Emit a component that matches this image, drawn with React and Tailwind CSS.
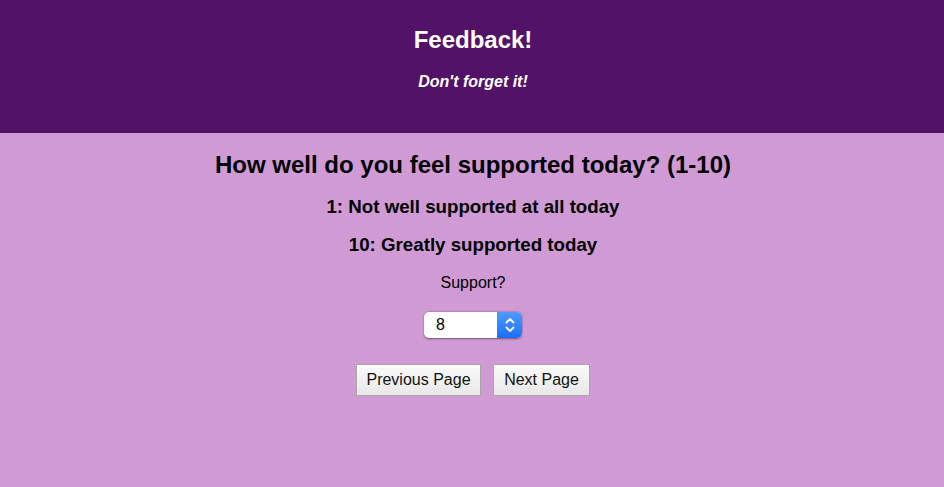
export default function App() {
  return (
    <div className="min-h-screen bg-[#d09ad4] text-black" style={{ fontFamily: '"Liberation Sans", Arial, Helvetica, sans-serif' }}>
      <header className="h-[133px] bg-[#521268] text-white flex flex-col items-center pt-[26px] pl-[2px]">
        <h1 className="text-[24px] leading-[28px] font-bold">Feedback!</h1>
        <p className="mt-[18px] text-[16px] leading-[20px] font-bold italic">Don't forget it!</p>
      </header>
      <main className="flex flex-col items-center pl-[2px]">
        <h2 className="mt-[18px] text-[24px] leading-[28px] font-bold">How well do you feel supported today? (1-10)</h2>
        <h3 className="mt-[17px] text-[18.72px] leading-[22px] font-bold">1: Not well supported at all today</h3>
        <h3 className="mt-[16px] text-[18.72px] leading-[22px] font-bold">10: Greatly supported today</h3>
        <p className="mt-[17px] text-[16px] leading-[20px]">Support?</p>
        <div className="mt-[19px] flex h-[26px] w-[98px] rounded-[5px] bg-white shadow-[0_0.5px_2px_rgba(0,0,0,0.45)] overflow-hidden">
          <div className="flex-1 flex items-center pl-[12px] text-[16px]">8</div>
          <div className="w-[25px] h-full bg-gradient-to-b from-[#4f9bfd] to-[#1a6ef5] flex items-center justify-center">
            <svg width="12" height="18" viewBox="0 0 12 18" fill="none" stroke="white" strokeWidth="1.8" strokeLinecap="round" strokeLinejoin="round">
              <path d="M2.5 6.5 L6 3 L9.5 6.5" />
              <path d="M2.5 11.5 L6 15 L9.5 11.5" />
            </svg>
          </div>
        </div>
        <div className="mt-[26px] flex gap-[12px]">
          <button className="h-[32px] w-[125px] border border-[#a8a8a8] bg-gradient-to-b from-[#fafafa] to-[#e8e8e8] text-[16px] text-[#111]">Previous Page</button>
          <button className="h-[32px] w-[97px] border border-[#a8a8a8] bg-gradient-to-b from-[#fafafa] to-[#e8e8e8] text-[16px] text-[#111]">Next Page</button>
        </div>
      </main>
    </div>
  );
}
